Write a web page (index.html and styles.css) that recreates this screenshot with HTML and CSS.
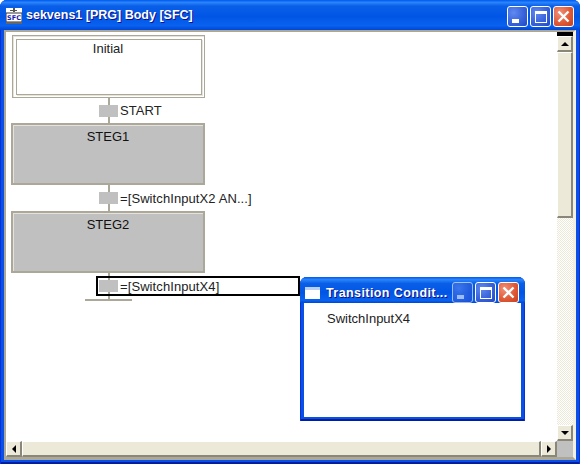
FILE: index.html
```html
<!DOCTYPE html>
<html lang="en">
<head>
  <meta charset="UTF-8">
  <meta name="viewport" content="width=device-width, initial-scale=1.0">
  <title>sekvens1 [PRG] Body [SFC]</title>
  <link rel="stylesheet" href="styles.css">
</head>
<body>
  <div class="window">
    <div class="titlebar">
      <svg class="app-icon" width="16" height="16" viewBox="0 0 16 16">
        <rect width="16" height="16" fill="#fff"/>
        <rect x="7" y="0" width="2" height="4" fill="#555"/>
        <rect x="4" y="2" width="7" height="1" fill="#555"/>
        <rect x="0" y="5" width="16" height="9" fill="#fff" stroke="#333" stroke-width="1"/>
        <rect x="0" y="14" width="16" height="2" fill="#666"/>
        <text x="8" y="12" class="app-icon-text" text-anchor="middle">SFC</text>
      </svg>
      <span class="title-text">sekvens1 [PRG] Body [SFC]</span>
      <div class="caption-buttons">
        <button class="cap-btn"><span class="glyph-min"></span></button>
        <button class="cap-btn"><span class="glyph-max"></span></button>
        <button class="cap-btn cap-close">
          <svg width="13" height="13" viewBox="0 0 13 13"><path d="M1.5 1.5 11.5 11.5M11.5 1.5 1.5 11.5" stroke="#fff" stroke-width="2.4"/></svg>
        </button>
      </div>
    </div>

    <div class="frame">
      <div class="canvas">
        <div class="sfc">
          <div class="step-init"><div class="step-init-inner">Initial</div></div>
          <div class="trans"><span class="trans-block"></span><span>START</span></div>
          <div class="step">STEG1</div>
          <div class="trans"><span class="trans-block"></span><span>=[SwitchInputX2 AN...]</span></div>
          <div class="step">STEG2</div>
          <div class="trans trans-last">
            <span class="trans-block"></span><span>=[SwitchInputX4]</span>
            <div class="selection"></div>
          </div>
          <div class="end-bar"></div>
        </div>

        <div class="popup">
          <div class="popup-title">
            <span class="popup-icon"></span>
            <span class="popup-text">Transition Condit...</span>
            <div class="popup-buttons">
              <button class="cap-btn cap-dim"><span class="glyph-min"></span></button>
              <button class="cap-btn"><span class="glyph-max"></span></button>
              <button class="cap-btn cap-close">
                <svg width="13" height="13" viewBox="0 0 13 13"><path d="M1.5 1.5 11.5 11.5M11.5 1.5 1.5 11.5" stroke="#fff" stroke-width="2.4"/></svg>
              </button>
            </div>
          </div>
          <div class="popup-body">SwitchInputX4</div>
        </div>
      </div>

      <div class="vscroll">
        <div class="vscroll-cap"></div>
        <div class="sb-btn"><span class="arrow-up"></span></div>
        <div class="vthumb"></div>
        <div class="vtrack"></div>
        <div class="sb-btn"><span class="arrow-down"></span></div>
      </div>

      <div class="hscroll">
        <div class="sb-btn"><span class="arrow-left"></span></div>
        <div class="hthumb"></div>
        <div class="sb-btn"><span class="arrow-right"></span></div>
      </div>
      <div class="corner"></div>
    </div>
  </div>
</body>
</html>
```

FILE: styles.css
```css
html, body {
  margin: 0;
  padding: 0;
}
body {
  width: 580px;
  height: 464px;
  overflow: hidden;
  font-family: "Liberation Sans", Arial, sans-serif;
  font-size: 13px;
  color: #000;
}
.window {
  width: 580px;
  height: 464px;
  box-sizing: border-box;
  display: flex;
  flex-direction: column;
  background: #0a4fe6;
  border-radius: 7px 7px 0 0;
  box-shadow: inset 1px 0 0 #0831d9, inset -1px 0 0 #0831d9, inset 0 -2px 0 #001ea0;
  padding: 0 4px 4px;
}
.titlebar {
  height: 30px;
  margin: 0 -4px;
  padding: 0 6px;
  display: flex;
  align-items: center;
  border-radius: 7px 7px 0 0;
  background: linear-gradient(to bottom, #0058ee 0%, #2a85fb 8%, #0a5fe8 20%, #0055e5 55%, #0a62f0 85%, #0046d5 100%);
}
.app-icon {
  flex: none;
  margin-top: 2px;
}
.app-icon-text {
  font-family: "DejaVu Sans", sans-serif;
  font-size: 6.5px;
  font-weight: bold;
  fill: #1a1ab0;
}
.title-text {
  margin-left: 4px;
  color: #fff;
  font-weight: bold;
  font-size: 12.5px;
  text-shadow: 1px 1px 0 #0f1089;
  white-space: nowrap;
}
.caption-buttons {
  margin-left: auto;
  display: flex;
  gap: 2px;
  margin-top: 3px;
}
.cap-btn {
  width: 21px;
  height: 21px;
  padding: 0;
  box-sizing: border-box;
  border: 1px solid #fff;
  border-radius: 3px;
  background: radial-gradient(circle at 30% 30%, #5f8af0 0%, #3c66dc 50%, #2048c8 100%);
  display: flex;
  align-items: center;
  justify-content: center;
}
.cap-close {
  background: radial-gradient(circle at 30% 30%, #f0907a 0%, #e05a38 55%, #c8401c 100%);
}
.cap-dim {
  opacity: 0.6;
}
.glyph-min {
  display: block;
  flex: none;
  width: 7px;
  height: 4px;
  background: #fff;
  margin: 8px 5px 0 0;
}
.glyph-max {
  display: block;
  flex: none;
  width: 12px;
  height: 12px;
  box-sizing: border-box;
  border: 1px solid #fff;
  border-top-width: 3px;
}

/* client area */
.frame {
  flex: 1;
  min-height: 0;
  display: grid;
  grid-template-columns: 1fr 16px;
  grid-template-rows: 1fr 16px;
  background: #fff;
  border-top: 2px solid #aca899;
  border-left: 2px solid #aca899;
  border-bottom: 3px solid #aca899;
  border-right: 3px solid #f2f0e6;
}
.canvas {
  position: relative;
  background: #fff;
  overflow: hidden;
}
.sfc {
  margin-left: 5px;
  margin-top: 3px;
  width: 194px;
}
.step-init {
  margin-left: 1px;
  box-sizing: border-box;
  height: 63px;
  width: 193px;
  border: 1px solid #aca899;
  box-shadow: inset 1px 1px 0 #e6e4da;
  padding: 3px 2px 2px 3px;
}
.step-init-inner {
  box-sizing: border-box;
  height: 100%;
  border: 1px solid #aca899;
  box-shadow: 1px 1px 0 #e6e4da;
  text-align: center;
  line-height: 15px;
  padding: 1px 2px 0 0;
  color: #222;
}
.step {
  box-sizing: border-box;
  height: 62px;
  border: 2px solid #aca899;
  box-shadow: inset 1px 1px 0 #e4e2da;
  background: #c0c0c0;
  text-align: center;
  line-height: 15px;
  padding-top: 4px;
  color: #111;
}
.trans {
  position: relative;
  height: 25px;
  padding-left: 88px;
  display: flex;
  align-items: center;
  gap: 2px;
  color: #222;
  letter-spacing: 0.09px;
  white-space: nowrap;
  background: linear-gradient(#aca899, #aca899) 97px 0 / 2px 100% no-repeat;
}
.step + .trans {
  height: 26px;
}
.trans-block {
  width: 19px;
  height: 12px;
  background: #c0c0c0;
  flex: none;
}
.selection {
  position: absolute;
  left: 85px;
  top: 3px;
  width: 204px;
  height: 20px;
  box-sizing: border-box;
  border: 2px solid #000;
}
.end-bar {
  width: 47px;
  height: 2px;
  margin-left: 74px;
  background: #aca899;
}

/* floating window over the diagram */
.popup {
  position: absolute;
  left: 294px;
  top: 245px;
  width: 225px;
  height: 144px;
  box-sizing: border-box;
  display: flex;
  flex-direction: column;
  background: #0a4fe6;
  border-radius: 7px 7px 0 0;
  box-shadow: inset 1px 0 0 #0831d9, inset -1px 0 0 #0831d9, inset 0 -2px 0 #001ea0;
  padding: 0 4px 4px;
}
.popup-title {
  height: 26px;
  margin: 0 -4px;
  padding: 0 6px 0 5px;
  display: flex;
  align-items: center;
  border-radius: 7px 7px 0 0;
  background: linear-gradient(to bottom, #0058ee 0%, #2a85fb 10%, #0a5fe8 25%, #0055e5 60%, #0a62f0 90%, #0046d5 100%);
}
.popup-icon {
  width: 15px;
  height: 12px;
  box-sizing: border-box;
  background: #fff;
  border-top: 3px solid #b8d0f5;
  flex: none;
  margin-top: 5px;
}
.popup-text {
  margin-left: 6px;
  margin-top: 6px;
  color: #fff;
  font-weight: bold;
  font-size: 12.5px;
  letter-spacing: 0.42px;
  text-shadow: 1px 1px 0 #0f1089;
  white-space: nowrap;
}
.popup-buttons {
  margin-left: auto;
  display: flex;
  gap: 2px;
  margin-top: 5px;
}
.popup-body {
  flex: 1;
  background: #fff;
  padding: 8px 0 0 23px;
  color: #222;
  line-height: 15px;
}

/* scrollbars */
.vscroll {
  display: flex;
  flex-direction: column;
  background: #fff;
}
.vscroll-cap {
  height: 4px;
  background: #000;
  flex: none;
}
.sb-btn {
  flex: none;
  width: 16px;
  height: 16px;
  box-sizing: border-box;
  background: #ece9d8;
  border-top: 1px solid #fff;
  border-left: 1px solid #fff;
  border-right: 2px solid #8a8778;
  border-bottom: 2px solid #8a8778;
  display: flex;
  align-items: center;
  justify-content: center;
}
.vthumb {
  flex: none;
  height: 166px;
  box-sizing: border-box;
  background: #ece9d8;
  border-top: 1px solid #fff;
  border-left: 1px solid #fff;
  border-right: 2px solid #8a8778;
  border-bottom: 2px solid #8a8778;
}
.vtrack {
  flex: 1;
  background-color: #fff;
  background-image: conic-gradient(#ece9d8 25%, #fff 0 50%, #ece9d8 0 75%, #fff 0);
  background-size: 2px 2px;
}
.hscroll {
  display: flex;
  background: #fff;
}
.hthumb {
  flex: 1;
  box-sizing: border-box;
  background: #ece9d8;
  border-top: 1px solid #fff;
  border-left: 1px solid #fff;
  border-right: 2px solid #8a8778;
  border-bottom: 2px solid #8a8778;
}
.corner {
  background: #c0c0c0;
}
.arrow-up, .arrow-down, .arrow-left, .arrow-right {
  display: block;
  width: 0;
  height: 0;
  border-style: solid;
  border-color: transparent;
}
.arrow-up {
  border-width: 0 4px 4px;
  border-bottom-color: #000;
}
.arrow-down {
  border-width: 4px 4px 0;
  border-top-color: #000;
}
.arrow-left {
  border-width: 4px 4px 4px 0;
  border-right-color: #000;
}
.arrow-right {
  border-width: 4px 0 4px 4px;
  border-left-color: #000;
}
```
